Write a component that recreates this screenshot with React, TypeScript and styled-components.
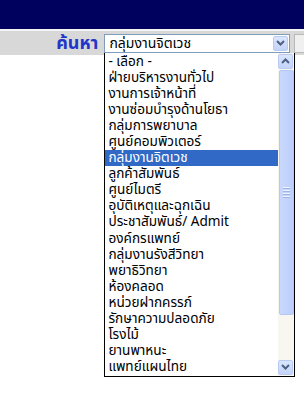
import React from "react"
import styled, { createGlobalStyle } from "styled-components"

const GlobalStyle = createGlobalStyle`
  html, body {
    margin: 0;
    padding: 0;
    background: #ffffff;
  }
  body {
    font-family: Tahoma, "Noto Sans Thai", "Noto Sans", "DejaVu Sans", sans-serif;
  }
`

const items = [
  "- เลือก -",
  "ฝ่ายบริหารงานทั่วไป",
  "งานการเจ้าหน้าที่",
  "งานซ่อมบำรุงด้านโยธา",
  "กลุ่มการพยาบาล",
  "ศูนย์คอมพิวเตอร์",
  "กลุ่มงานจิตเวช",
  "ลูกค้าสัมพันธ์",
  "ศูนย์ไมตรี",
  "อุบัติเหตุและฉุกเฉิน",
  "ประชาสัมพันธ์/ Admit",
  "องค์กรแพทย์",
  "กลุ่มงานรังสีวิทยา",
  "พยาธิวิทยา",
  "ห้องคลอด",
  "หน่วยฝากครรภ์",
  "รักษาความปลอดภัย",
  "โรงไม้",
  "ยานพาหนะ",
  "แพทย์แผนไทย",
]

const selected = 6

const Page = styled.div`
  width: 304px;
  height: 414px;
  overflow: hidden;
`

const TopBar = styled.div`
  height: 29px;
  background: #00005e;
  border-bottom: 2px solid #f4f4f4;
`

const SearchBar = styled.div`
  height: 24px;
  background: #d8d8d8;
  display: flex;
  align-items: center;
  padding-left: 52px;
  gap: 6px;
`

const Label = styled.span`
  font-size: 18px;
  font-weight: bold;
  color: #1f35c9;
  width: 48px;
  text-align: right;
`

const SelectWrap = styled.div`
  position: relative;
  width: 192px;
  height: 19px;
`

const SelectBox = styled.div`
  box-sizing: border-box;
  height: 19px;
  background: #fff;
  border: 1px solid #7f9db9;
  display: flex;
  align-items: center;
  padding-left: 4px;
  font-size: 14px;
  color: #000;
`

const SelectText = styled.span`
  flex: 1;
  white-space: nowrap;
`

const ArrowButton = styled.div`
  box-sizing: border-box;
  width: 15px;
  height: 15px;
  margin-right: 1px;
  border: 1px solid #b9cbf3;
  border-radius: 2px;
  background: linear-gradient(180deg, #dbe6fd 0%, #c3d4fa 100%);
  display: flex;
  align-items: center;
  justify-content: center;
  flex-shrink: 0;
`

const NextBox = styled.div`
  width: 10px;
  height: 19px;
  box-sizing: border-box;
  border: 1px solid #b8b8b8;
  border-right: none;
  background: #f0f0f0;
  margin-left: -2px;
`

const Dropdown = styled.div`
  position: absolute;
  top: 19px;
  left: 0;
  width: 191px;
  height: 324px;
  box-sizing: border-box;
  border: 1px solid #000;
  border-top: none;
  background: #fff;
  display: flex;
`

const List = styled.div`
  flex: 1;
  display: flex;
  flex-direction: column;
  padding-top: 1px;
`

const Item = styled.div<{ $active?: boolean }>`
  height: 16.1px;
  line-height: 16px;
  padding-left: 3px;
  font-size: 13.6px;
  white-space: nowrap;
  color: ${(p) => (p.$active ? "#ffffff" : "#000000")};
  background: ${(p) => (p.$active ? "#3169c6" : "transparent")};
`

const ScrollBar = styled.div`
  width: 16px;
  display: flex;
  flex-direction: column;
  align-items: center;
  background: #f7f6f1;
  padding: 1px 0;
  box-sizing: border-box;
`

const Thumb = styled.div`
  box-sizing: border-box;
  width: 15px;
  height: 245px;
  margin: 1px 0;
  border: 1px solid #b4c8f6;
  border-radius: 2px;
  background: linear-gradient(90deg, #c9d8fc 0%, #bccffb 100%);
  display: flex;
  flex-direction: column;
  align-items: center;
  justify-content: center;
  gap: 2px;
`

const Grip = styled.div`
  width: 7px;
  height: 1px;
  background: #eef3fe;
  box-shadow: 0 1px 0 #9db4e8;
`

const Spacer = styled.div`
  flex: 1;
`

const Chevron = ({ up }: { up?: boolean }) => (
  <svg width="9" height="6" viewBox="0 0 9 6">
    <path
      d={up ? "M1 5 L4.5 1.5 L8 5" : "M1 1 L4.5 4.5 L8 1"}
      stroke="#4d6185"
      strokeWidth="2"
      fill="none"
    />
  </svg>
)

export default function App() {
  return (
    <Page>
      <GlobalStyle />
      <TopBar />
      <SearchBar>
        <Label>ค้นหา</Label>
        <SelectWrap>
          <SelectBox>
            <SelectText>{items[selected]}</SelectText>
            <ArrowButton>
              <Chevron />
            </ArrowButton>
          </SelectBox>
          <Dropdown>
            <List>
              {items.map((item, i) => (
                <Item key={i} $active={i === selected}>
                  {item}
                </Item>
              ))}
            </List>
            <ScrollBar>
              <ArrowButton>
                <Chevron up />
              </ArrowButton>
              <Thumb>
                <Grip />
                <Grip />
                <Grip />
                <Grip />
              </Thumb>
              <Spacer />
              <ArrowButton>
                <Chevron />
              </ArrowButton>
            </ScrollBar>
          </Dropdown>
        </SelectWrap>
        <NextBox />
      </SearchBar>
    </Page>
  )
}
